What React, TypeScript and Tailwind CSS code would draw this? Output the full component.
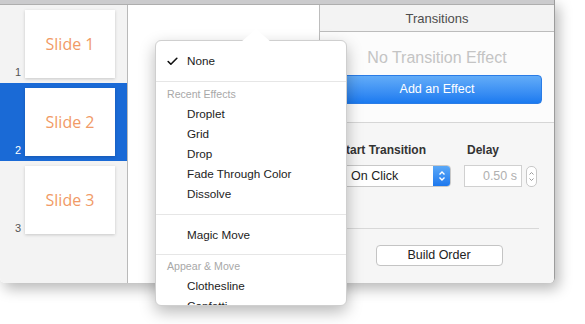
import { Check } from 'lucide-react';

const slides = [1, 2, 3];

const SlideRow = ({ n, selected }: { n: number; selected?: boolean }) => (
  <div className={`flex items-end h-[78px] pt-[5px] pb-[5px] ${selected ? 'bg-[#1a6ad6]' : ''}`}>
    <div className={`w-[25px] pr-[4px] text-right text-[11px] leading-[12px] ${selected ? 'text-white' : 'text-[#555]'}`}>{n}</div>
    <div className="w-[90px] h-[68px] bg-white shadow-[0_1px_3px_rgba(0,0,0,0.18)] flex items-center justify-center">
      <span className="font-['Open_Sans',sans-serif] text-[16px] text-[#f19a66]">Slide {n}</span>
    </div>
  </div>
);

const MenuItem = ({ label }: { label: string }) => (
  <div className="h-[20px] flex items-center pl-[31px] text-[11.7px] text-[#222]">{label}</div>
);

const MenuHeader = ({ label }: { label: string }) => (
  <div className="h-[18px] flex items-center pl-[11px] text-[10.6px] text-[#a8a8a8]">{label}</div>
);

const App = () => {
  return (
    <div className="relative w-[585px] h-[324px] bg-white overflow-hidden font-['Liberation_Sans',Arial,sans-serif]">
      <div className="w-[555px] h-[283px] flex flex-col rounded-b-[5px] overflow-hidden shadow-[4px_6px_14px_rgba(0,0,0,0.28)] border-r border-[#9c9c9c]">
        <div className="h-[5px] bg-[#cbcbcd] border-b border-[#aeaeae]" />
        <div className="flex flex-1 min-h-0">
          <div className="w-[128px] bg-[#f3f3f3] border-r border-[#b9b9b9]">
            {slides.map(n => (
              <SlideRow key={n} n={n} selected={n === 2} />
            ))}
          </div>
          <div className="w-[192px] bg-white border-r border-[#bdbdbd]" />
          <div className="flex-1 flex flex-col">
            <div className="h-[27px] bg-[#f3f3f3] border-b border-[#bcbcbc] flex items-center justify-center pt-[2px] text-[13px] text-[#4d4d4d]">
              Transitions
            </div>
            <div className="bg-[#fcfcfc] px-[12px] pt-[16px] h-[91px] border-b border-[#d6d6d6]">
              <div className="text-center text-[16px] text-[#c4c4c4] leading-[20px]">No Transition Effect</div>
              <div className="mt-[7px] h-[29px] rounded-[4px] bg-gradient-to-b from-[#62acf8] to-[#1a7af0] border border-[#2a7ce6] flex items-center justify-center text-white text-[12.5px]">
                Add an Effect
              </div>
            </div>
            <div className="flex-1 bg-[#f6f6f6] px-[14px] pt-[20px]">
              <div className="flex">
                <div className="w-[130px]">
                  <div className="text-[12px] font-bold text-[#333] leading-[14px] pl-[4px]">Start Transition</div>
                  <div className="mt-[8px] h-[22px] w-[117px] bg-white border border-[#c8c8c8] rounded-[4px] flex items-center justify-between overflow-hidden">
                    <span className="pl-[16px] text-[12.5px] text-[#222]">On Click</span>
                    <div className="w-[17px] h-full bg-gradient-to-b from-[#5aa8f7] to-[#1c78ee] flex items-center justify-center">
                      <svg width="8" height="12" viewBox="0 0 8 12" fill="none" stroke="white" strokeWidth="1.4">
                        <path d="M1.5 4.5 L4 2 L6.5 4.5" />
                        <path d="M1.5 7.5 L4 10 L6.5 7.5" />
                      </svg>
                    </div>
                  </div>
                </div>
                <div>
                  <div className="text-[12px] font-bold text-[#333] leading-[14px] pl-[3px]">Delay</div>
                  <div className="mt-[8px] flex items-center gap-[4px]">
                    <div className="h-[22px] w-[58px] bg-white border border-[#d0d0d0] flex items-center justify-end pr-[4px] text-[12.5px] text-[#b0b0b0]">
                      0.50 s
                    </div>
                    <div className="h-[21px] w-[11px] border border-[#c8c8c8] rounded-[5px] bg-white flex items-center justify-center">
                      <svg width="7" height="13" viewBox="0 0 7 13" fill="none" stroke="#999" strokeWidth="1">
                        <path d="M1.5 4.5 L3.5 2.5 L5.5 4.5" />
                        <path d="M1.5 8.5 L3.5 10.5 L5.5 8.5" />
                      </svg>
                    </div>
                  </div>
                </div>
              </div>
              <div className="mt-[41px] border-t border-[#d8d8d8] mr-[1px]" />
              <div className="flex justify-center mt-[16px] pl-[4px]">
                <div className="w-[127px] h-[21px] bg-white border border-[#c4c4c4] rounded-[4px] flex items-center justify-center text-[12.5px] text-[#222]">
                  Build Order
                </div>
              </div>
            </div>
          </div>
        </div>
      </div>

      {/* popover menu */}
      <div className="absolute left-[155px] top-[40px] w-[192px] h-[266px]">
        <svg width="30" height="14" viewBox="0 0 30 14" className="absolute left-[86px] -top-[12px]">
          <path d="M0 14 L15 1 L30 14 Z" fill="white" />
        </svg>
        <div className="w-full h-full bg-white rounded-[6px] border border-[#cfcfcf] shadow-[0_6px_16px_rgba(0,0,0,0.28)] overflow-hidden pt-[10px]">
          <div className="h-[20px] flex items-center text-[11.7px] text-[#222]">
            <div className="w-[31px] flex justify-center pl-[2px]">
              <Check size={13} strokeWidth={3} className="text-[#111]" />
            </div>
            None
          </div>
          <div className="mt-[10px] border-t border-[#e6e6e6]" />
          <div className="mt-[4px]">
            <MenuHeader label="Recent Effects" />
            <MenuItem label="Droplet" />
            <MenuItem label="Grid" />
            <MenuItem label="Drop" />
            <MenuItem label="Fade Through Color" />
            <MenuItem label="Dissolve" />
          </div>
          <div className="mt-[10px] border-t border-[#e6e6e6]" />
          <div className="mt-[10px]">
            <MenuItem label="Magic Move" />
          </div>
          <div className="mt-[9px] border-t border-[#e6e6e6]" />
          <div className="mt-[3px]">
            <MenuHeader label="Appear & Move" />
            <MenuItem label="Clothesline" />
            <MenuItem label="Confetti" />
          </div>
        </div>
      </div>
    </div>
  );
};

export default App;
